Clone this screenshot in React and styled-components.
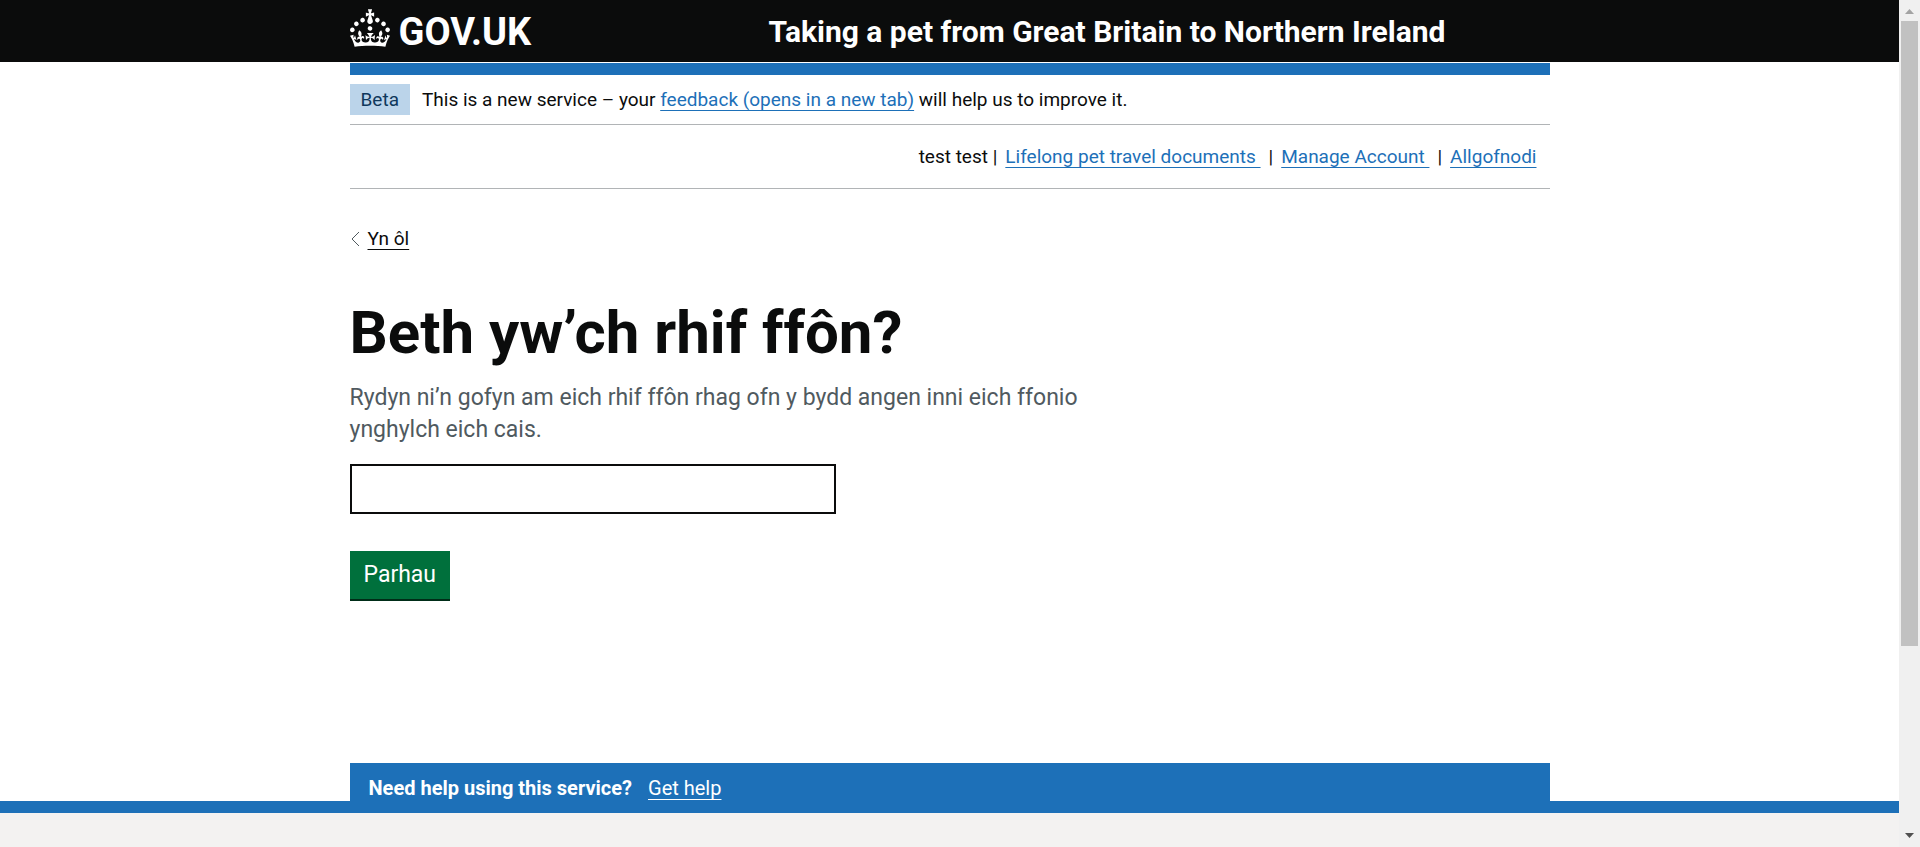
import React from 'react';
import styled, { createGlobalStyle } from 'styled-components';

const INK = '#0b0c0c';
const BLUE = '#1d70b8';
const RULE = '#b1b4b6';

const GlobalStyle = createGlobalStyle`
  * { box-sizing: border-box; }
  body {
    margin: 0;
    background: #fff;
    color: ${INK};
    font-family: Roboto, "Liberation Sans", sans-serif;
    font-size: 19px;
    line-height: 25px;
  }
`;

const Window = styled.div`
  display: flex;
  min-height: 100vh;
`;

const Page = styled.div`
  flex: 1;
  min-width: 0;
  display: flex;
  flex-direction: column;
`;

const Container = styled.div`
  width: 100%;
  max-width: 1200px;
  margin: 0 auto;
`;

const Header = styled.header`
  background: ${INK};
  color: #fff;
  margin-bottom: 1px;
`;

const HeaderRow = styled(Container)`
  display: flex;
  align-items: center;
  height: 62px;
  padding-top: 2px;
`;

const HomeLink = styled.a`
  display: flex;
  align-items: center;
  gap: 9px;
  width: 419px;
  padding-bottom: 8px;
  color: inherit;
  text-decoration: none;
  font-size: 38px;
  line-height: 38px;
  font-weight: 700;

  svg { width: 40px; height: 38px; fill: currentColor; }
  span { padding-top: 8px; }
`;

const ServiceName = styled.a`
  color: inherit;
  text-decoration: none;
  font-size: 30px;
  line-height: 36px;
  font-weight: 700;
`;

const HeaderBar = styled(Container)`
  height: 12px;
  background: ${BLUE};
`;

const PhaseBanner = styled(Container)`
  display: flex;
  align-items: center;
  gap: 12px;
  padding: 9px 0;
  border-bottom: 1px solid ${RULE};
`;

const Tag = styled.strong`
  padding: 3px 11px;
  background: #bbd4ea;
  color: #0f385c;
  font-weight: 400;
`;

const Link = styled.a`
  color: ${({ $tone }) => $tone || BLUE};
  text-decoration: underline;
  text-decoration-thickness: 1px;
  text-underline-offset: 4px;
  text-decoration-skip-ink: none;
  white-space: pre;
`;

const AccountNav = styled(Container)`
  display: flex;
  justify-content: flex-end;
  gap: 8px;
  padding: 19px 13px 19px 0;
  border-bottom: 1px solid ${RULE};
`;

const BackRow = styled(Container)`
  display: flex;
  align-items: center;
  gap: 8px;
  padding-top: 37px;

  svg { width: 10px; height: 16px; fill: none; stroke: #505a5f; }
`;

const Main = styled(Container).attrs({ as: 'main' })`
  padding: 50px 0 164px;
`;

const Question = styled.label`
  display: block;
  font-size: 60px;
  line-height: 64px;
  font-weight: 700;
`;

const Heading = styled.h1`
  margin: 0 0 17px;
  font: inherit;
`;

const Hint = styled.p`
  max-width: 780px;
  margin: 0 0 18px;
  color: #505a5f;
  font-size: 23px;
  line-height: 32px;
`;

const PhoneInput = styled.input`
  display: block;
  width: 486px;
  max-width: 100%;
  height: 50px;
  padding: 6px;
  border: 2px solid ${INK};
  border-radius: 0;
  font: inherit;
  font-size: 23px;
`;

const Submit = styled.button`
  margin-top: 37px;
  padding: 11px 14px 12px;
  border: 0;
  background: #00703c;
  box-shadow: 0 2px 0 #002d18;
  color: #fff;
  font: inherit;
  font-size: 23px;
`;

const HelpBox = styled(Container)`
  display: flex;
  gap: 16px;
  padding: 13px 19px 0;
  background: ${BLUE};
  color: #fff;
  font-size: 20px;

  strong { font-weight: 700; }
`;

const Footer = styled.footer`
  flex: 1;
  min-height: 46px;
  border-top: 12px solid ${BLUE};
  background: #f3f2f1;
`;

const ScrollTrack = styled.div`
  position: sticky;
  top: 0;
  flex: none;
  display: flex;
  flex-direction: column;
  align-items: center;
  width: 21px;
  height: 100vh;
  background: #f0f0f0;

  svg { display: block; width: 21px; height: 21px; flex: none; }
`;

const ScrollThumb = styled.div`
  width: 17px;
  flex: 0 0 73.8%;
  margin-bottom: auto;
  background: #c1c1c1;
`;

const Crown = () => (
  <svg viewBox="0 0 32 30" aria-hidden="true">
    <path d="M22.6 10.4c-1 .4-2-.1-2.4-1-.4-.9.1-2 1-2.4.9-.4 2 .1 2.4 1s-.1 2-1 2.4m-5.9 6.7c-.9.4-2-.1-2.4-1-.4-.9.1-2 1-2.4.9-.4 2 .1 2.4 1s-.1 2-1 2.4m10.8-3.7c-1 .4-2-.1-2.4-1-.4-.9.1-2 1-2.4.9-.4 2 .1 2.4 1s0 2-1 2.4m3.3 4.8c-1 .4-2-.1-2.4-1-.4-.9.1-2 1-2.4.9-.4 2 .1 2.4 1s-.1 2-1 2.4M17 4.7l2.3 1.2V2.5l-2.3.7-.2-.2.9-3h-3.4l.9 3-.2.2c-.1.1-2.3-.7-2.3-.7v3.4L15 4.7c.1.1.1.2.2.2l-1.3 4c-.1.2-.1.4-.1.6 0 1.1.8 2 1.9 2.2h.7c1-.2 1.9-1.1 1.9-2.1 0-.2 0-.4-.1-.6l-1.3-4c-.1-.2 0-.2.1-.3m-7.6 5.7c.9.4 2-.1 2.4-1 .4-.9-.1-2-1-2.4-.9-.4-2 .1-2.4 1s0 2 1 2.4m-5 3c.9.4 2-.1 2.4-1 .4-.9-.1-2-1-2.4-.9-.4-2 .1-2.4 1s.1 2 1 2.4m-3.2 4.8c.9.4 2-.1 2.4-1 .4-.9-.1-2-1-2.4-.9-.4-2 .1-2.4 1s0 2 1 2.4m14.8 11c4.4 0 8.6.3 12.3.8 1.1-4.5 2.4-7 3.7-8.8l-2.5-.9c.2 1.3.3 1.9 0 2.7-.4-.4-.8-1.1-1.1-2.3l-1.2 4c.7-.5 1.3-.8 2-.9-1.1 2.5-2.6 3.1-3.5 3-1.1-.2-1.7-1.2-1.5-2.1.3-1.2 1.5-1.5 2.1-.1 1.1-2.3-.8-3-2-2.3 1.9-1.9 2.1-3.5.6-5.6-2.1 1.6-2.1 3.2-1.2 5.5-1.2-1.4-3.2-.6-2.5 1.6.9-1.4 2.1-.5 1.9.8-.2 1.1-1.7 2.1-3.5 1.9-2.7-.2-2.9-2.1-2.9-3.6.7-.1 1.9.5 2.9 1.9l.4-4.3c-1.1 1.1-2.1 1.4-3.2 1.4.4-1.2 2.1-3 2.1-3h-5.4s1.7 1.9 2.1 3c-1.1 0-2.1-.2-3.2-1.4l.4 4.3c1-1.4 2.2-2 2.9-1.9-.1 1.5-.2 3.4-2.9 3.6-1.9.2-3.4-.8-3.5-1.9-.2-1.3 1-2.2 1.9-.8.7-2.3-1.2-3-2.5-1.6.9-2.2.9-3.9-1.2-5.5-1.5 2-1.3 3.7.6 5.6-1.2-.7-3.1 0-2 2.3.6-1.4 1.8-1.1 2.1.1.2.9-.3 1.9-1.5 2.1-.9.2-2.4-.5-3.5-3 .6 0 1.2.3 2 .9l-1.2-4c-.3 1.1-.7 1.9-1.1 2.3-.3-.8-.2-1.4 0-2.7l-2.9.9C1.3 23 2.6 25.5 3.7 30c3.7-.5 7.9-.8 12.3-.8" />
  </svg>
);

export default function App() {
  return (
    <>
      <GlobalStyle />
      <Window>
        <Page>
          <Header>
            <HeaderRow>
              <HomeLink href="#"><Crown /><span>GOV.UK</span></HomeLink>
              <ServiceName href="#">Taking a pet from Great Britain to Northern Ireland</ServiceName>
            </HeaderRow>
          </Header>
          <HeaderBar />
          <PhaseBanner>
            <Tag>Beta</Tag>
            <span>
              This is a new service – your <Link href="#">feedback (opens in a new tab)</Link> will help us to improve it.
            </span>
          </PhaseBanner>
          <AccountNav as="nav">
            <span>test test |</span>
            <Link href="#">{'Lifelong pet travel documents '}</Link>
            <span>|</span>
            <Link href="#">{'Manage Account '}</Link>
            <span>|</span>
            <Link href="#">Allgofnodi</Link>
          </AccountNav>
          <BackRow>
            <svg viewBox="0 0 10 16" aria-hidden="true"><path d="M9 1L2 8l7 7" /></svg>
            <Link href="#" $tone={INK}>Yn ôl</Link>
          </BackRow>
          <Main>
            <Heading><Question htmlFor="phone">Beth yw’ch rhif ffôn?</Question></Heading>
            <Hint id="phone-hint">Rydyn ni’n gofyn am eich rhif ffôn rhag ofn y bydd angen inni eich ffonio ynghylch eich cais.</Hint>
            <PhoneInput id="phone" type="tel" aria-describedby="phone-hint" />
            <Submit type="button">Parhau</Submit>
          </Main>
          <HelpBox>
            <strong>Need help using this service?</strong>
            <Link href="#" $tone="#fff">Get help</Link>
          </HelpBox>
          <Footer />
        </Page>
        <ScrollTrack aria-hidden="true">
          <svg viewBox="0 0 21 21"><path d="M6 14h9L10.500 9z" fill="#a3a3a3" /></svg>
          <ScrollThumb />
          <svg viewBox="0 0 21 21"><path d="M6 7h9L10.500 12z" fill="#505050" /></svg>
        </ScrollTrack>
      </Window>
    </>
  );
}
